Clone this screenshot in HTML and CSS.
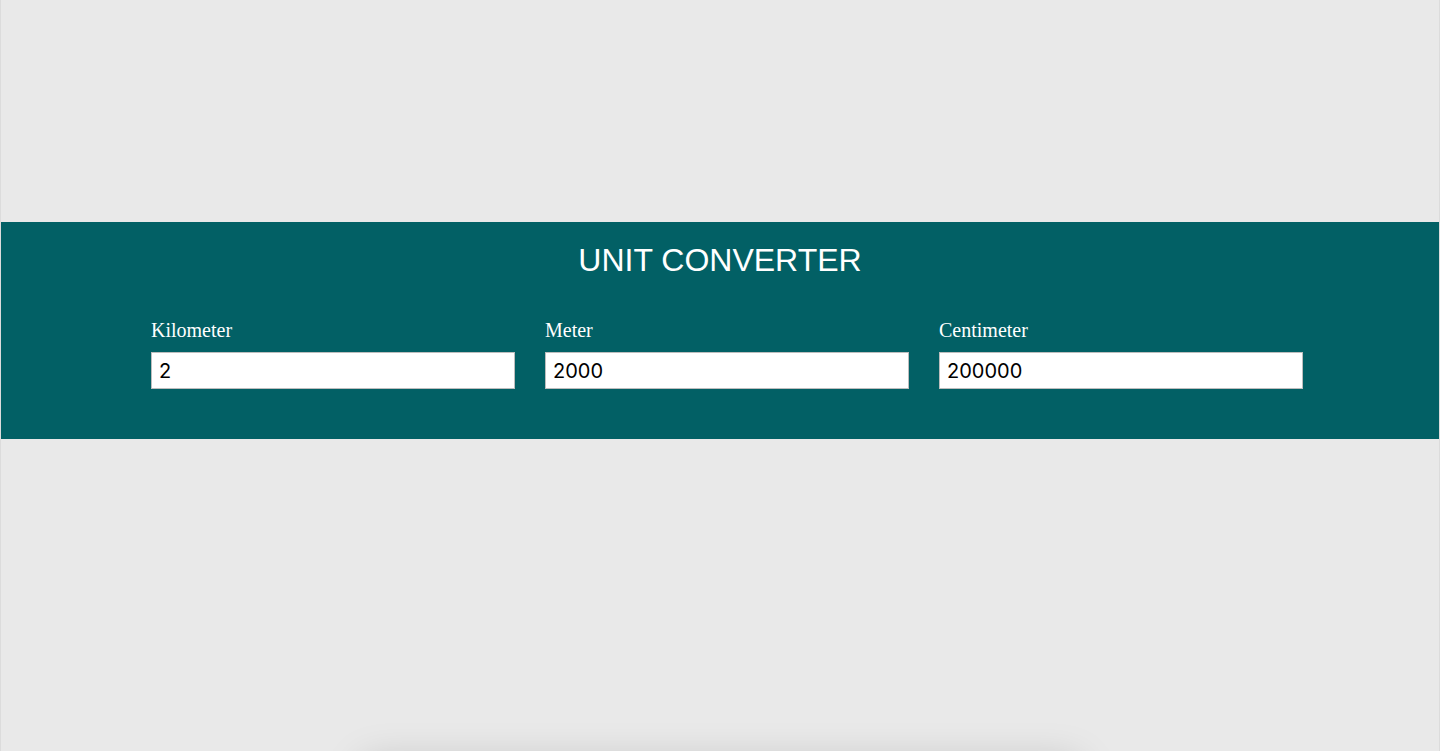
FILE: index.html
```html
<!DOCTYPE html>
<html lang="en">
<head>
<meta charset="utf-8">
<title>Unit Converter</title>
<link rel="stylesheet" href="styles.css">
</head>
<body>
<div class="page">
  <section class="band">
    <h1 class="title">UNIT CONVERTER</h1>
    <div class="fields">
      <label class="field">
        <span class="label">Kilometer</span>
        <input class="input" type="text" value="2">
      </label>
      <label class="field">
        <span class="label">Meter</span>
        <input class="input" type="text" value="2000">
      </label>
      <label class="field">
        <span class="label">Centimeter</span>
        <input class="input" type="text" value="200000">
      </label>
    </div>
  </section>
  <div class="shadow-card"></div>
</div>
</body>
</html>
```
FILE: styles.css
```css
html, body {
  margin: 0;
  padding: 0;
  height: 100%;
  overflow: hidden;
}
body {
  background: #e9e9e9;
  font-family: "Liberation Serif", "Times New Roman", serif;
}
.page {
  position: relative;
  height: 751px;
  overflow: hidden;
  box-sizing: border-box;
  border-left: 1px solid #dcdcdc;
  border-right: 1px solid #dcdcdc;
  padding-top: 222px;
}
.band {
  background: #026065;
  height: 217px;
  box-sizing: border-box;
  padding-top: 18px;
  border-left: 1px solid #2d7a7e;
  border-right: 1px solid #2d7a7e;
  margin: 0 -1px;
}
.title {
  margin: 0;
  text-align: center;
  color: #ffffff;
  font-family: "Liberation Sans", Arial, sans-serif;
  font-weight: normal;
  font-size: 32px;
  line-height: 40px;
}
.fields {
  display: flex;
  gap: 30px;
  margin: 39px 0 0 150px;
  width: 1152px;
}
.field {
  display: flex;
  flex-direction: column;
  width: 364px;
}
.label {
  color: #ffffff;
  font-size: 20px;
  line-height: 22px;
  margin-bottom: 11px;
}
.input {
  box-sizing: border-box;
  width: 364px;
  height: 37px;
  margin: 0;
  border: 1px solid #bdbdbd;
  background: #ffffff;
  padding: 0 7px;
  font-family: Inter, "Liberation Sans", Arial, sans-serif;
  font-size: 20px;
  color: #000000;
  outline: none;
}
.shadow-card {
  position: absolute;
  left: 370px;
  width: 700px;
  top: 770px;
  height: 100px;
  background: #e9e9e9;
  box-shadow: 0 0 40px 8px rgba(0, 0, 0, 0.18);
}
```
